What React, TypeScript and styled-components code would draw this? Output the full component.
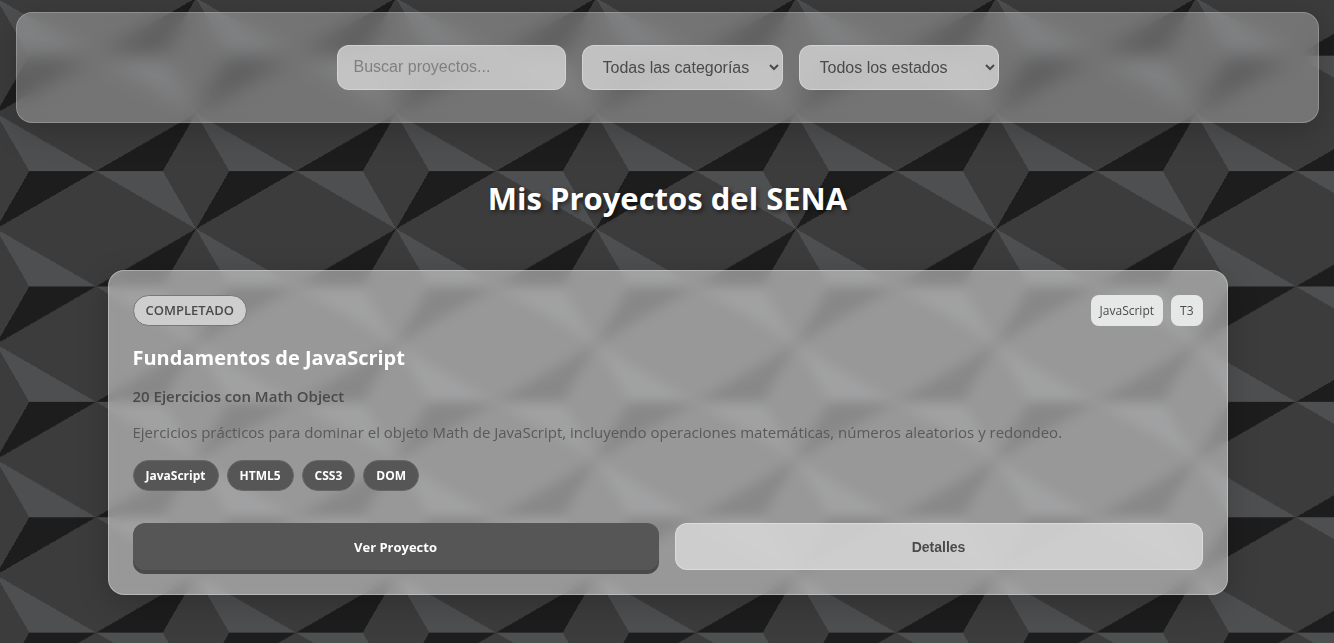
import React from "react";
import styled, { createGlobalStyle, css } from "styled-components";

const sans = `"Segoe UI", "Open Sans", "Noto Sans", sans-serif`;
const controlFont = `"Liberation Sans", Arial, sans-serif`;

const GlobalStyle = createGlobalStyle`
  *, *::before, *::after { box-sizing: border-box; }
  body {
    --s: 200px;
    --h: calc(var(--s) * 0.577);
    --dark: #1d1d1d;
    --light: #4e4f51;
    --mid: #3c3c3c;
    margin: 0;
    min-height: 100vh;
    font-family: ${sans};
    background:
      repeating-conic-gradient(from -30deg, var(--mid) 0 60deg, #0000 0 180deg)
        calc(var(--s) / 2 - 4px) calc(var(--h) / 2 - 2px),
      repeating-conic-gradient(from 60deg, var(--dark) 0 30deg, var(--light) 0 60deg, var(--mid) 0 180deg)
        -4px -2px;
    background-size: var(--s) var(--h);
  }
`;

const Page = styled.div`
  padding: 12px 15px 48px 16px;
`;

const FilterBar = styled.form`
  display: flex;
  flex-wrap: wrap;
  justify-content: center;
  gap: 16px;
  padding: 32px;
  border: 1px solid rgba(255, 255, 255, 0.2);
  border-radius: 16px;
  background: rgba(255, 255, 255, 0.29);
  backdrop-filter: blur(10px);
  box-shadow: 0 8px 32px rgba(0, 0, 0, 0.2);
`;

const field = css`
  height: 45px;
  border: 1px solid rgba(255, 255, 255, 0.3);
  border-radius: 12px;
  background: rgba(212, 212, 212, 0.8);
  color: #4a4a4a;
  font: 16px ${controlFont};
`;

const SearchInput = styled.input`
  ${field}
  width: 229px;
  padding: 11px 16px 13px;
  &::placeholder { color: #808080; }
`;

const FilterSelect = styled.select`
  ${field}
  min-width: 200px;
  padding: 12px 16px;
`;

const Main = styled.main`
  max-width: 1120px;
  margin: 0 auto;
`;

const PageTitle = styled.h1`
  margin: 51px 0 48px;
  color: #fff;
  font-size: 31px;
  font-weight: 700;
  line-height: 48px;
  text-align: center;
  text-shadow: 2px 2px 4px rgba(0, 0, 0, 0.5);
`;

const Card = styled.article`
  padding: 24px;
  border: 1px solid rgba(255, 255, 255, 0.3);
  border-radius: 16px;
  background: rgba(243, 243, 243, 0.5);
  backdrop-filter: blur(6px);
  box-shadow: 0 8px 32px rgba(0, 0, 0, 0.2);
`;

const CardHeader = styled.header`
  display: flex;
  justify-content: space-between;
  align-items: center;
  margin-bottom: 16px;
`;

const Status = styled.span`
  padding: 0 12px;
  border: 1px solid #777;
  border-radius: 16px;
  background: #cecece;
  color: #4a4a4a;
  font-size: 13px;
  font-weight: 600;
  line-height: 29px;
  text-transform: uppercase;
`;

const ChipRow = styled.div`
  display: flex;
  flex-wrap: wrap;
  gap: 8px;
`;

const Meta = styled.span`
  padding: 0 9px;
  border-radius: 8px;
  background: #e6e8e7;
  color: #4a4a4a;
  font-size: 12px;
  line-height: 31px;
`;

const Tag = styled.span`
  padding: 0 12px;
  border: 1px solid #666;
  border-radius: 16px;
  background: #565656;
  color: #fff;
  font-size: 12px;
  font-weight: 700;
  line-height: 29px;
`;

const CardTitle = styled.h2`
  margin: 0 0 8px;
  color: #fff;
  font-size: 20px;
  font-weight: 700;
  line-height: 32px;
`;

const Subtitle = styled.p`
  margin: 0 0 10px;
  color: #4a4a4a;
  font-size: 15px;
  font-weight: 600;
  line-height: 28px;
`;

const Description = styled.p`
  margin: 0 0 16px;
  color: #5a5a5a;
  font-size: 15px;
  line-height: 24px;
`;

const Actions = styled.div`
  display: flex;
  gap: 16px;
  margin-top: 32px;
`;

const ActionButton = styled.button<{ $primary?: boolean }>`
  flex: 1;
  height: 47px;
  border-radius: 12px;
  font-weight: 700;
  cursor: pointer;
  ${({ $primary }) =>
    $primary
      ? css`
          border: 0;
          background: #565656;
          box-shadow: 0 4px 0 #4a4a4a;
          color: #fff;
          font-family: ${sans};
          font-size: 13px;
          line-height: 20px;
        `
      : css`
          border: 1px solid rgba(255, 255, 255, 0.3);
          background: rgba(216, 216, 216, 0.84);
          color: #4a4a4a;
          font-family: ${controlFont};
          font-size: 14px;
        `}
`;

const tags = ["JavaScript", "HTML5", "CSS3", "DOM"];

export default function App() {
  return (
    <>
      <GlobalStyle />
      <Page>
        <FilterBar onSubmit={(e) => e.preventDefault()}>
          <SearchInput type="text" placeholder="Buscar proyectos..." aria-label="Buscar proyectos" />
          <FilterSelect aria-label="Categoría">
            <option>Todas las categorías</option>
          </FilterSelect>
          <FilterSelect aria-label="Estado">
            <option>Todos los estados</option>
          </FilterSelect>
        </FilterBar>
        <Main>
          <PageTitle>Mis Proyectos del SENA</PageTitle>
          <Card>
            <CardHeader>
              <Status>Completado</Status>
              <ChipRow>
                <Meta>JavaScript</Meta>
                <Meta>T3</Meta>
              </ChipRow>
            </CardHeader>
            <CardTitle>Fundamentos de JavaScript</CardTitle>
            <Subtitle>20 Ejercicios con Math Object</Subtitle>
            <Description>
              Ejercicios prácticos para dominar el objeto Math de JavaScript, incluyendo operaciones
              matemáticas, números aleatorios y redondeo.
            </Description>
            <ChipRow>
              {tags.map((tag) => (
                <Tag key={tag}>{tag}</Tag>
              ))}
            </ChipRow>
            <Actions>
              <ActionButton type="button" $primary>Ver Proyecto</ActionButton>
              <ActionButton type="button">Detalles</ActionButton>
            </Actions>
          </Card>
        </Main>
      </Page>
    </>
  );
}
